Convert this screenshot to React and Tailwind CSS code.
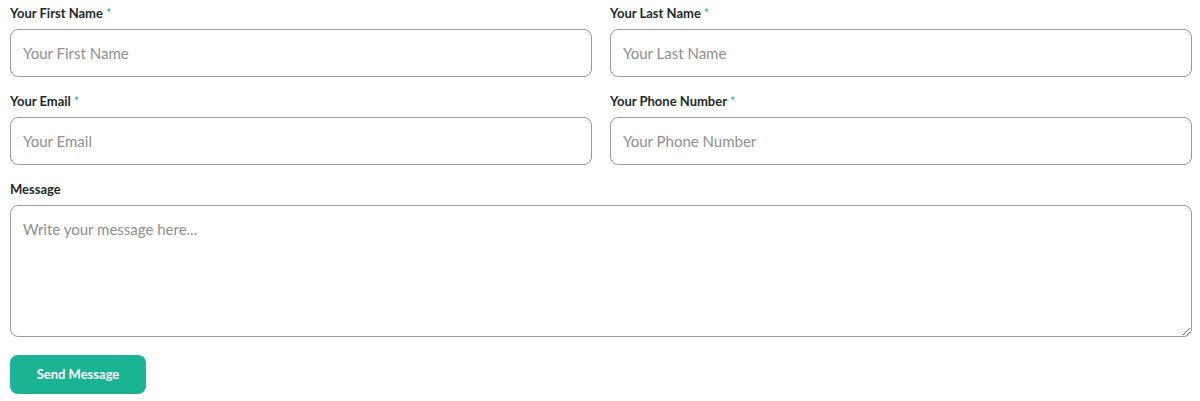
import React from 'react';

const Label = ({ children, required }) => (
  <label className="block text-[13px] font-bold text-[#1d2b26] leading-4 mb-[8px]">
    {children}
    {required && <span className="text-[#1ab394] ml-[3px] font-normal">*</span>}
  </label>
);

const inputCls =
  'w-full h-[48px] border border-[#9a9a9a] rounded-[8px] px-[12px] text-[15px] text-[#333] placeholder:text-[#8f8f8f] outline-none bg-white';

export default function App() {
  return (
    <div className="bg-white min-h-[401px] pl-[10px] pr-[8px] pt-[5px] font-['Lato',sans-serif]">
      <form className="flex flex-col">
        <div className="grid grid-cols-2 gap-x-[18px] gap-y-[16px]">
          <div>
            <Label required>Your First Name</Label>
            <input className={inputCls} placeholder="Your First Name" />
          </div>
          <div>
            <Label required>Your Last Name</Label>
            <input className={inputCls} placeholder="Your Last Name" />
          </div>
          <div>
            <Label required>Your Email</Label>
            <input className={inputCls} placeholder="Your Email" />
          </div>
          <div>
            <Label required>Your Phone Number</Label>
            <input className={inputCls} placeholder="Your Phone Number" />
          </div>
        </div>
        <div className="mt-[16px]">
          <Label>Message</Label>
          <textarea
            className="w-full h-[132px] block border border-[#9a9a9a] rounded-[8px] px-[12px] py-[12px] text-[15px] text-[#333] placeholder:text-[#8f8f8f] outline-none"
            placeholder="Write your message here..."
          />
        </div>
        <div className="mt-[18px]">
          <button
            type="button"
            className="h-[39px] w-[136px] rounded-[8px] bg-[#1ab394] text-white text-[13px] font-bold"
          >
            Send Message
          </button>
        </div>
      </form>
    </div>
  );
}
